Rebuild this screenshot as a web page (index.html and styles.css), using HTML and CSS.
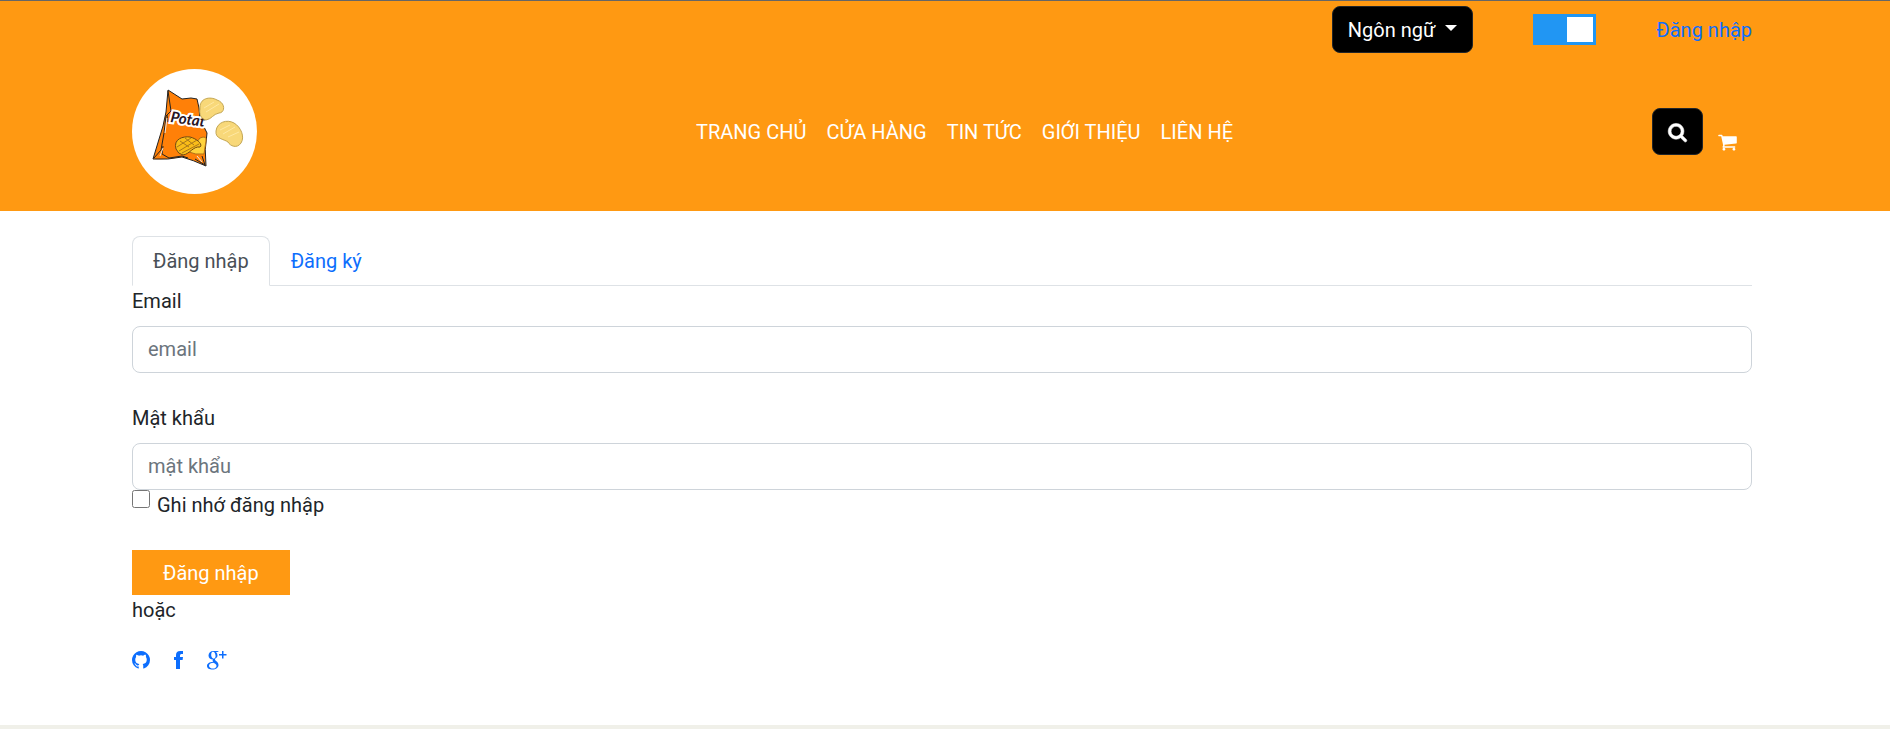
FILE: index.html
```html
<!DOCTYPE html>
<html lang="vi">
<head>
<meta charset="utf-8">
<meta name="viewport" content="width=device-width, initial-scale=1">
<title>Đăng nhập</title>
<link rel="stylesheet" href="styles.css">
</head>
<body>
<header class="site-header">
  <div class="container topbar">
    <button class="btn-dark language" type="button">Ngôn ngữ <span class="caret"></span></button>
    <input class="switch" type="checkbox" checked aria-label="Chế độ hiển thị">
    <a class="link" href="#login">Đăng nhập</a>
  </div>
  <div class="container navbar">
    <a class="logo" href="#home" aria-label="Trang chủ">
      <svg viewBox="0 0 125 125" width="125" height="125" aria-hidden="true">
        <circle cx="62.500" cy="62.500" r="62.500" fill="#fff"/>
        <path d="M36 21L50 30L59 29L65 30L67 39L68 50L75 64Q72 81 74 97Q61 91 50 88Q36 91 21 90L31 57L34 43Z" fill="#ff8008" stroke="#222" stroke-width="1" stroke-linejoin="round"/>
        <path d="M36 22L39 42L34 47L32 64L29 81L22 89M35 46L36 53M31 77L30 85L37 89L50 87L56 89M63 90L73 96L70 87" fill="none" stroke="#222" stroke-width="1"/>
        <path d="M35 49L33 64M31 79L28 87M65 87L70 93" stroke="#f5e8dc" stroke-width="1"/>
        <path d="M68 69Q75 66 74 72L72 85Q63 86 57 83Z" fill="#ffd33c" stroke="#b06c16" stroke-width="1"/>
        <path d="M44 80C41 70 51 67 58 68C66 70 71 76 68 78C61 77 58 85 51 86Q46 85 44 80Z" fill="#f9bd19" stroke="#6d4713" stroke-width="1"/>
        <path d="M45 78L59 69M47 82L65 71M50 84L67 75M48 72L57 78M53 69L62 76" stroke="#a9771b" stroke-width="1"/>
        <text class="logo-shadow" x="38" y="53" transform="rotate(8 38 53)">Potat</text>
        <text class="logo-text" x="38" y="53" transform="rotate(8 38 53)">Potat</text>
        <g fill="#f8d879" stroke="#c3a653" stroke-width="1">
          <path d="M68 40C67 29 78 27 85 31C94 34 93 44 87 44C81 45 80 50 74 51C69 50 67 45 68 40Z"/>
          <path d="M84 62C85 53 95 50 102 54C109 58 113 68 109 74C105 80 98 77 96 73C92 70 83 70 84 62Z"/>
        </g>
        <path d="M72 39L82 33M74 43L87 35M88 61L98 56M91 65L103 58M96 68L107 63" stroke="#ffe8a2" stroke-width="1"/>
      </svg>
    </a>
    <nav class="menu" aria-label="Menu chính">
      <a href="#home">TRANG CHỦ</a>
      <a href="#shop">CỬA HÀNG</a>
      <a href="#news">TIN TỨC</a>
      <a href="#about">GIỚI THIỆU</a>
      <a href="#contact">LIÊN HỆ</a>
    </nav>
    <div class="actions">
      <button class="btn-dark search" type="button" aria-label="Tìm kiếm">
        <svg class="icon" viewBox="0 0 1664 1792" aria-hidden="true"><path stroke="currentColor" stroke-width="50" d="M1152 832q0-185-131.500-316.500T704 384 387.500 515.500 256 832t131.500 316.500T704 1280t316.500-131.500T1152 832zm512 832q0 52-38 90t-90 38q-54 0-90-38l-343-342q-179 124-399 124-143 0-273.500-55.500t-225-150-150-225T0 832t55.500-273.500 150-225 225-150T704 128t273.500 55.500 225 150 150 225T1408 832q0 220-124 399l343 343q37 37 37 90z"/></svg>
      </button>
      <a class="cart" href="#cart" aria-label="Giỏ hàng">
        <svg class="icon" viewBox="0 0 1664 1792" aria-hidden="true"><path d="M640 1536q0 52-38 90t-90 38-90-38-38-90 38-90 90-38 90 38 38 90zm896 0q0 52-38 90t-90 38-90-38-38-90 38-90 90-38 90 38 38 90zm128-1088v512q0 24-16.500 42.500t-40.500 21.500l-1044 122q13 60 13 70 0 16-24 64h920q26 0 45 19t19 45-19 45-45 19H448q-26 0-45-19t-19-45q0-11 8-31.500t16-36 21.500-40T445 1207L268 384H64q-26 0-45-19T0 320t19-45 45-19h256q16 0 28.500 6.500T368 278t13 24.500 8 26 5.500 29.500 4.500 26h1201q26 0 45 19t19 45z"/></svg>
      </a>
    </div>
  </div>
</header>
<main class="page">
  <div class="container">
  <ul class="tabs">
    <li><a class="tab active" href="#login">Đăng nhập</a></li>
    <li><a class="tab" href="#register">Đăng ký</a></li>
  </ul>
  <form id="login">
    <div class="field">
      <label for="email">Email</label>
      <input class="input" id="email" type="email" placeholder="email">
    </div>
    <div class="field">
      <label for="password">Mật khẩu</label>
      <input class="input" id="password" type="password" placeholder="mật khẩu">
      <div class="remember">
        <input id="remember" type="checkbox">
        <label for="remember">Ghi nhớ đăng nhập</label>
      </div>
    </div>
    <button class="submit" type="submit">Đăng nhập</button>
  </form>
  <div>hoặc</div>
  <div class="socials">
    <a href="#github" aria-label="GitHub"><svg width="18" height="18" viewBox="0 128 1536 1536" aria-hidden="true"><path d="M768 128q209 0 385.500 103T1433 510.500 1536 896q0 251-146.500 451.500T1011 1625q-27 5-40-7t-13-30q0-3 .5-76.500t.5-134.500q0-97-52-142 57-6 102.500-18t94-39 81-66.500 53-105T1258 856q0-119-79-206 37-91-8-204-28-9-81 11t-92 44l-38 24q-93-26-192-26t-192 26q-16-11-42.500-27T450 459.500 365 446q-45 113-8 204-79 87-79 206 0 85 20.500 150t52.500 105 80.500 67 94 39 102.500 18q-39 36-49 103-21 10-45 15t-57 5-65.500-21.500T356 1274q-19-32-48.500-52t-49.500-24l-20-3q-21 0-29 4.500t-5 11.500 9 14 13 12l7 5q22 10 43.500 38t31.500 51l10 23q13 38 44 61.500t67 30 69.500 7 55.500-3.500l23-4q0 38 .5 88.500t.5 54.500q0 18-13 30t-40 7q-232-77-378.500-277.500T0 896q0-209 103-385.500T382.500 231 768 128z"/></svg></a>
    <a href="#facebook" aria-label="Facebook"><svg width="9" height="18" viewBox="0 0 9 18" aria-hidden="true"><path d="M9 0V3H7.200Q6 3 6 4.500V6H9L8.600 9H6V18H2V9H0V6H2V4Q2 0 6.200 0Z"/></svg></a>
    <a href="#google" aria-label="Google+"><svg width="20" height="20" viewBox="0 0 20 20" aria-hidden="true"><path fill-rule="evenodd" d="M12 1H6.500C3.500 1 1.500 3 1.500 5.500S3.500 9.500 6 9.500Q5 10.500 6 12C2.500 12 0 13.500 0 16S2.500 19.500 5.500 19.500C9 19.500 11.500 17.500 11.500 15C11.500 11.500 8 11 8 9.500S10.500 8 10.500 5.500Q10.500 3 9 2H10.500ZM6 1.800C8.700 1.800 9.800 8.700 6.800 8.700S3.200 1.800 6 1.800ZM6.500 12.800C8.500 14 9.500 14.500 9.500 16S8 18.600 6 18.600 2 17.500 2 15.700 4 12.900 6.500 12.800ZM15 1H16.500V4H19.500V5.500H16.500V8.500H15V5.500H12V4H15Z"/></svg></a>
  </div>
  </div>
</main>
<footer class="site-footer"></footer>
</body>
</html>
```
FILE: styles.css
```css
* { box-sizing: border-box; }
body {
  margin: 0;
  background: #fff;
  color: #212529;
  font: 400 20px/30px Roboto, sans-serif;
}
a { color: #0d6efd; text-decoration: none; }
button, input { font: inherit; }
button { cursor: pointer; }
.site-header {
  background: #ff9912;
  border-top: 1px solid #666;
  padding: 5px 6px 17px 0;
}
.container { width: 86%; max-width: 1620px; margin: 0 auto; }
.topbar { display: flex; align-items: center; justify-content: flex-end; gap: 60px; }
.btn-dark {
  height: 47px;
  padding: 0 15px;
  border: 1px solid #212529;
  border-radius: 8px;
  background: #000;
  color: #fff;
}
.language { display: flex; align-items: center; gap: 10px; }
.caret {
  border: 6px solid transparent;
  border-top-color: #fff;
  border-bottom: 0;
  margin-bottom: 4px;
}
.switch {
  appearance: none;
  display: flex;
  justify-content: flex-end;
  width: 63px;
  height: 31px;
  margin: 0;
  padding: 3px;
  background: #2196f3;
}
.switch::before { content: ""; width: 26px; height: 25px; background: #fff; }
.navbar { display: flex; justify-content: space-between; align-items: center; padding-top: 16px; }
.logo { display: flex; }
.logo-text, .logo-shadow { font: italic 700 15px Lato, sans-serif; }
.logo-text { fill: #28131f; }
.logo-shadow { fill: #fff; stroke: #fff; stroke-width: 4px; }
.menu { display: flex; gap: 20px; margin-left: 20px; }
.menu a { color: #fff; }
.actions { display: flex; gap: 15px; padding-right: 15px; }
.icon { display: block; width: 19px; height: 20px; fill: currentColor; overflow: visible; }
.cart { color: #fff; padding-top: 24px; }
.page { padding: 25px 6px 0 0; }
.tabs { display: flex; list-style: none; margin: 0; padding: 0; border-bottom: 1px solid #dee2e6; }
.tab {
  display: block;
  margin-bottom: -1px;
  padding: 9px 20px;
  border: 1px solid transparent;
  border-radius: 8px 8px 0 0;
}
.tab.active { color: #495057; background: #fff; border-color: #dee2e6 #dee2e6 #fff; }
.field { margin-bottom: 30px; }
.field > label { display: block; margin-bottom: 10px; }
.input {
  display: block;
  width: 100%;
  height: 47px;
  padding: 0 15px 1px;
  border: 1px solid #ced4da;
  border-radius: 8px;
  background: #fff;
  color: #212529;
}
.input::placeholder { color: #6c757d; opacity: 1; }
.remember { display: flex; align-items: flex-start; gap: 7px; }
.remember input { width: 18px; height: 18px; margin: 0; }
.submit {
  display: block;
  height: 45px;
  padding: 0 31px;
  border: 0;
  background: #ff9912;
  color: #fff;
}
.socials { display: flex; align-items: center; gap: 24px; padding: 20px 0 50px; height: 100px; }
.socials a { display: flex; }
.socials svg { fill: currentColor; }
.site-footer { height: 4px; background: #f0f0e9; }
```
